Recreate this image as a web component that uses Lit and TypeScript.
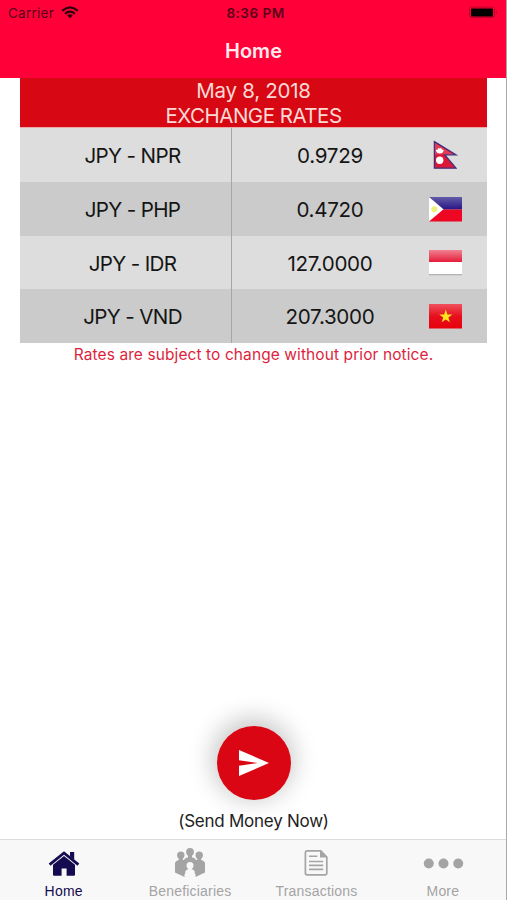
import { LitElement, html, css, svg } from "lit";
import { customElement, property } from "lit/decorators.js";

const flags: Record<string, unknown> = {
  NPR: svg`
    <path d="M6.4 2.6 L28 15.8 H16.8 L28 29.2 H6.4 Z" fill="#dc1838" stroke="#40307e" stroke-width="1.3"/>
    <path d="M7 4 L25 15.2 H7 Z" fill="#fff" opacity=".16"/>
    <path d="M7.8 11 L9.8 10.6 L10.4 9 L11.8 9.6 L13.2 9 L13.8 10.6 L15.8 11 Q15 14.6 11.8 14.6 Q8.6 14.6 7.8 11 Z" fill="#fff"/>
    <circle cx="11.7" cy="21.2" r="3.7" fill="#fff"/>`,
  PHP: svg`
    <rect x="1" y="4" width="33" height="12.5" fill="url(#blue)"/>
    <rect x="1" y="16.5" width="33" height="12" fill="#ee0723"/>
    <path d="M1 4 L15.5 16.3 L1 28.5 Z" fill="#fff"/>
    <circle cx="6.3" cy="16.3" r="3" fill="#eef07a"/>`,
  IDR: svg`
    <rect x="1" y="28" width="33" height="1.3" fill="#b4b4b4"/>
    <rect x="1" y="4" width="33" height="12.5" fill="url(#rose)"/>
    <rect x="1" y="16" width="33" height="12" fill="#fff"/>`,
  VND: svg`
    <rect x="1" y="4" width="33" height="24.5" fill="url(#red)"/>
    <path d="M17.8 9.6 L19.4 14.4 H24.4 L20.4 17.4 L21.9 22.3 L17.8 19.4 L13.7 22.3 L15.2 17.4 L11.2 14.4 H16.2 Z" fill="#ffe51c"/>`,
};

@customElement("rate-row")
class RateRow extends LitElement {
  @property() code = "";
  @property() rate = "";
  static styles = css`
    :host { display: flex; height: 53.8px; color: #151515; font-size: 20.6px; }
    .pair, .value { display: flex; align-items: center; justify-content: center; box-sizing: border-box; padding-top: 1.4px; }
    .pair { width: 212px; padding-left: 14px; border-right: 1px solid #a6a6a6; }
    .value { width: 196px; }
    .pair span { letter-spacing: -0.65px; }
    .value span { letter-spacing: -0.3px; }
    svg { align-self: center; width: 35px; height: 32px; }
  `;
  render() {
    return html`
      <div class="pair"><span>JPY - ${this.code}</span></div>
      <div class="value"><span>${this.rate}</span></div>
      <svg viewBox="0 0 35 32">
        <defs>
          <linearGradient id="blue" x2="0" y2="1"><stop stop-color="#625ca8"/><stop offset="1" stop-color="#291486"/></linearGradient>
          <linearGradient id="rose" x2="0" y2="1"><stop stop-color="#f08291"/><stop offset="1" stop-color="#e51737"/></linearGradient>
          <linearGradient id="red" x2="0" y2="1"><stop stop-color="#f0505c"/><stop offset=".5" stop-color="#e6101e"/><stop offset="1" stop-color="#e8000c"/></linearGradient>
        </defs>
        ${flags[this.code]}
      </svg>`;
  }
}

const tabs = [
  { label: "Home", icon: svg`
    <path d="M3.6 16.6 L18 5 L32.4 16.6" fill="none" stroke="currentColor" stroke-width="2.8"/>
    <path d="M24 4 H28.2 V12 L24 8.6 Z" fill="currentColor"/>
    <path d="M7 16.8 L18 8.1 L29 16.8 V26.8 Q29 27.8 28 27.8 H20.6 V20.4 H15.6 V27.8 H8 Q7 27.8 7 26.8 Z" fill="currentColor"/>` },
  { label: "Beneficiaries", icon: svg`
    <g fill="currentColor">
      <circle cx="8.8" cy="7.2" r="3.7"/><circle cx="27.2" cy="7.2" r="3.7"/>
      <path d="M6.8 9 H10.8 V13 H6.8 Z M25.2 9 H29.2 V13 H25.2 Z M16 6 H20 V11 H16 Z"/>
      <path d="M3 15.5 Q3 13 7 12 H12.5 V29 L3 24.5 Z M33 15.5 Q33 13 29 12 H23.5 V29 L33 24.5 Z"/>
      <path d="M11.4 15 Q11.4 10.2 15.6 9.6 H20.4 Q24.6 10.2 24.6 15 V26 H11.4 Z"/>
      <circle cx="18" cy="4" r="3.9"/>
    </g>
    <g fill="#f8f8f8">
      <circle cx="18" cy="17.4" r="3.5"/>
      <path d="M16.2 19 H19.8 V21.3 Q22.8 22 22.8 24.5 V29.5 H13.2 V24.5 Q13.2 22 16.2 21.3 Z"/>
    </g>` },
  { label: "Transactions", icon: svg`
    <path d="M22.8 2.9 H9.2 Q7.4 2.9 7.4 4.7 V25.1 Q7.4 26.9 9.2 26.9 H27 Q28.8 26.9 28.8 25.1 V9 Z" fill="none" stroke="currentColor" stroke-width="1.7"/>
    <path d="M22 2.5 L29.2 9.6 H22 Z" fill="currentColor"/>
    <path d="M11 8.3 H19.4 M11 13.5 H25.2 M11 17.4 H25.2 M11 21.4 H25.2" stroke="currentColor" stroke-width="1.6"/>` },
  { label: "More", icon: svg`
    <g fill="currentColor"><circle cx="3.8" cy="15.5" r="5"/><circle cx="18.5" cy="15.5" r="5"/><circle cx="33.2" cy="15.5" r="5"/></g>` },
];

@customElement("app-root")
class AppRoot extends LitElement {
  static styles = css`
    :host { display: flex; flex-direction: column; position: relative; box-sizing: border-box; width: 507px; height: 900px; overflow: hidden; background: #fff; font-family: Inter, "Liberation Sans", sans-serif; }
    .edge { position: absolute; top: 0; right: 0; width: 1px; height: 900px; background: #a9a9ac; }
    header { height: 78px; background: #ff0038; flex: none; }
    .status { display: grid; grid-template-columns: 1fr auto 1fr; align-items: center; height: 25px; color: #58001a; font-size: 13.5px; padding: 0 8px; }
    .carrier { display: flex; align-items: center; gap: 7px; letter-spacing: 0.25px; }
    .carrier svg { width: 18px; height: 13px; color: #2c000c; }
    .time { font-weight: 600; letter-spacing: 0.5px; padding-left: 4px; }
    .battery { justify-self: end; width: 30px; height: 13px; }
    h1 { margin: 0; height: 53px; line-height: 53px; text-align: center; color: #ffe9ed; font-size: 20px; font-weight: 600; }
    .table { width: 467px; margin-left: 20px; flex: none; }
    .heading { height: 50px; box-sizing: border-box; background: #d70813; color: #ffd9d5; text-align: center; font-size: 20.5px; line-height: 25px; border-bottom: 1px solid #e9aaa8; }
    .date { letter-spacing: -0.25px; }
    .title { letter-spacing: -0.5px; }
    rate-row:nth-child(even) { background: #dddddd; }
    rate-row:nth-child(odd) { background: #cbcbcb; }
    .note { padding-top: 1px; color: #dc1f3d; font-size: 15.5px; letter-spacing: 0.09px; line-height: 22px; text-align: center; }
    .send { flex: 1; display: flex; flex-direction: column; align-items: center; justify-content: flex-end; padding-bottom: 6px; color: #222; font-size: 17px; letter-spacing: -0.25px; line-height: 24px; }
    .fab { display: grid; place-items: center; width: 74px; height: 74px; margin-bottom: 9px; border-radius: 50%; background: #db0614; box-shadow: -1px -4px 25px 4px rgba(0,0,0,.22); }
    .fab svg { width: 30px; height: 26px; }
    nav { flex: none; display: grid; grid-template-columns: repeat(4, 126.4px); height: 61px; box-sizing: border-box; border-top: 1px solid #dcdcdc; background: #f8f8f8; font: 14px "Liberation Sans", Arial, sans-serif; color: #a4a4a4; }
    .tab { display: flex; flex-direction: column; align-items: center; padding: 8px 0 0 1px; letter-spacing: 0.2px; }
    .tab svg { width: 36px; height: 30px; overflow: visible; }
    .tab span { line-height: 16px; margin-top: 5px; }
    .active { color: #140b50; }
  `;
  render() {
    const rates = [["NPR", "0.9729"], ["PHP", "0.4720"], ["IDR", "127.0000"], ["VND", "207.3000"]];
    return html`
      <header>
        <div class="status">
          <div class="carrier"><span>Carrier</span>
            <svg viewBox="0 0 18 13" fill="none" stroke="currentColor" stroke-width="2.2">
              <path d="M1.2 4.8 Q9 -1.9 16.8 4.8 M4 7.8 Q9 3.5 14 7.8"/>
              <path d="M9 12.3 L6.2 9.4 Q9 7.2 11.8 9.4 Z" fill="currentColor" stroke="none"/>
            </svg>
          </div>
          <span class="time">8:36 PM</span>
          <svg class="battery" viewBox="0 0 30 13">
            <rect x=".6" y="1.2" width="25" height="10.4" rx="2" fill="none" stroke="#c0002b" stroke-width="1"/>
            <rect x="2" y="2.5" width="22" height="8" rx=".6" fill="#000"/>
            <path d="M27 4.5 Q29 6.4 27 8.4 Z" fill="#c0002b"/>
          </svg>
        </div>
        <h1>Home</h1>
      </header>
      <div class="table">
        <div class="heading"><div class="date">May 8, 2018</div><div class="title">EXCHANGE RATES</div></div>
        ${rates.map(([code, rate]) => html`<rate-row .code=${code} .rate=${rate}></rate-row>`)}
      </div>
      <div class="note">Rates are subject to change without prior notice.</div>
      <div class="send">
        <div class="fab">
          <svg viewBox="0 0 30 26"><path d="M0 0 L30 13 L0 26 V15.7 L19 13 L0 10.3 Z" fill="#fff"/></svg>
        </div>
        <span>(Send Money Now)</span>
      </div>
      <nav>${tabs.map((t, i) => html`
        <div class="tab ${i === 0 ? "active" : ""}"><svg viewBox="0 0 36 30">${t.icon}</svg><span>${t.label}</span></div>`)}
      </nav>
      <div class="edge"></div>`;
  }
}
